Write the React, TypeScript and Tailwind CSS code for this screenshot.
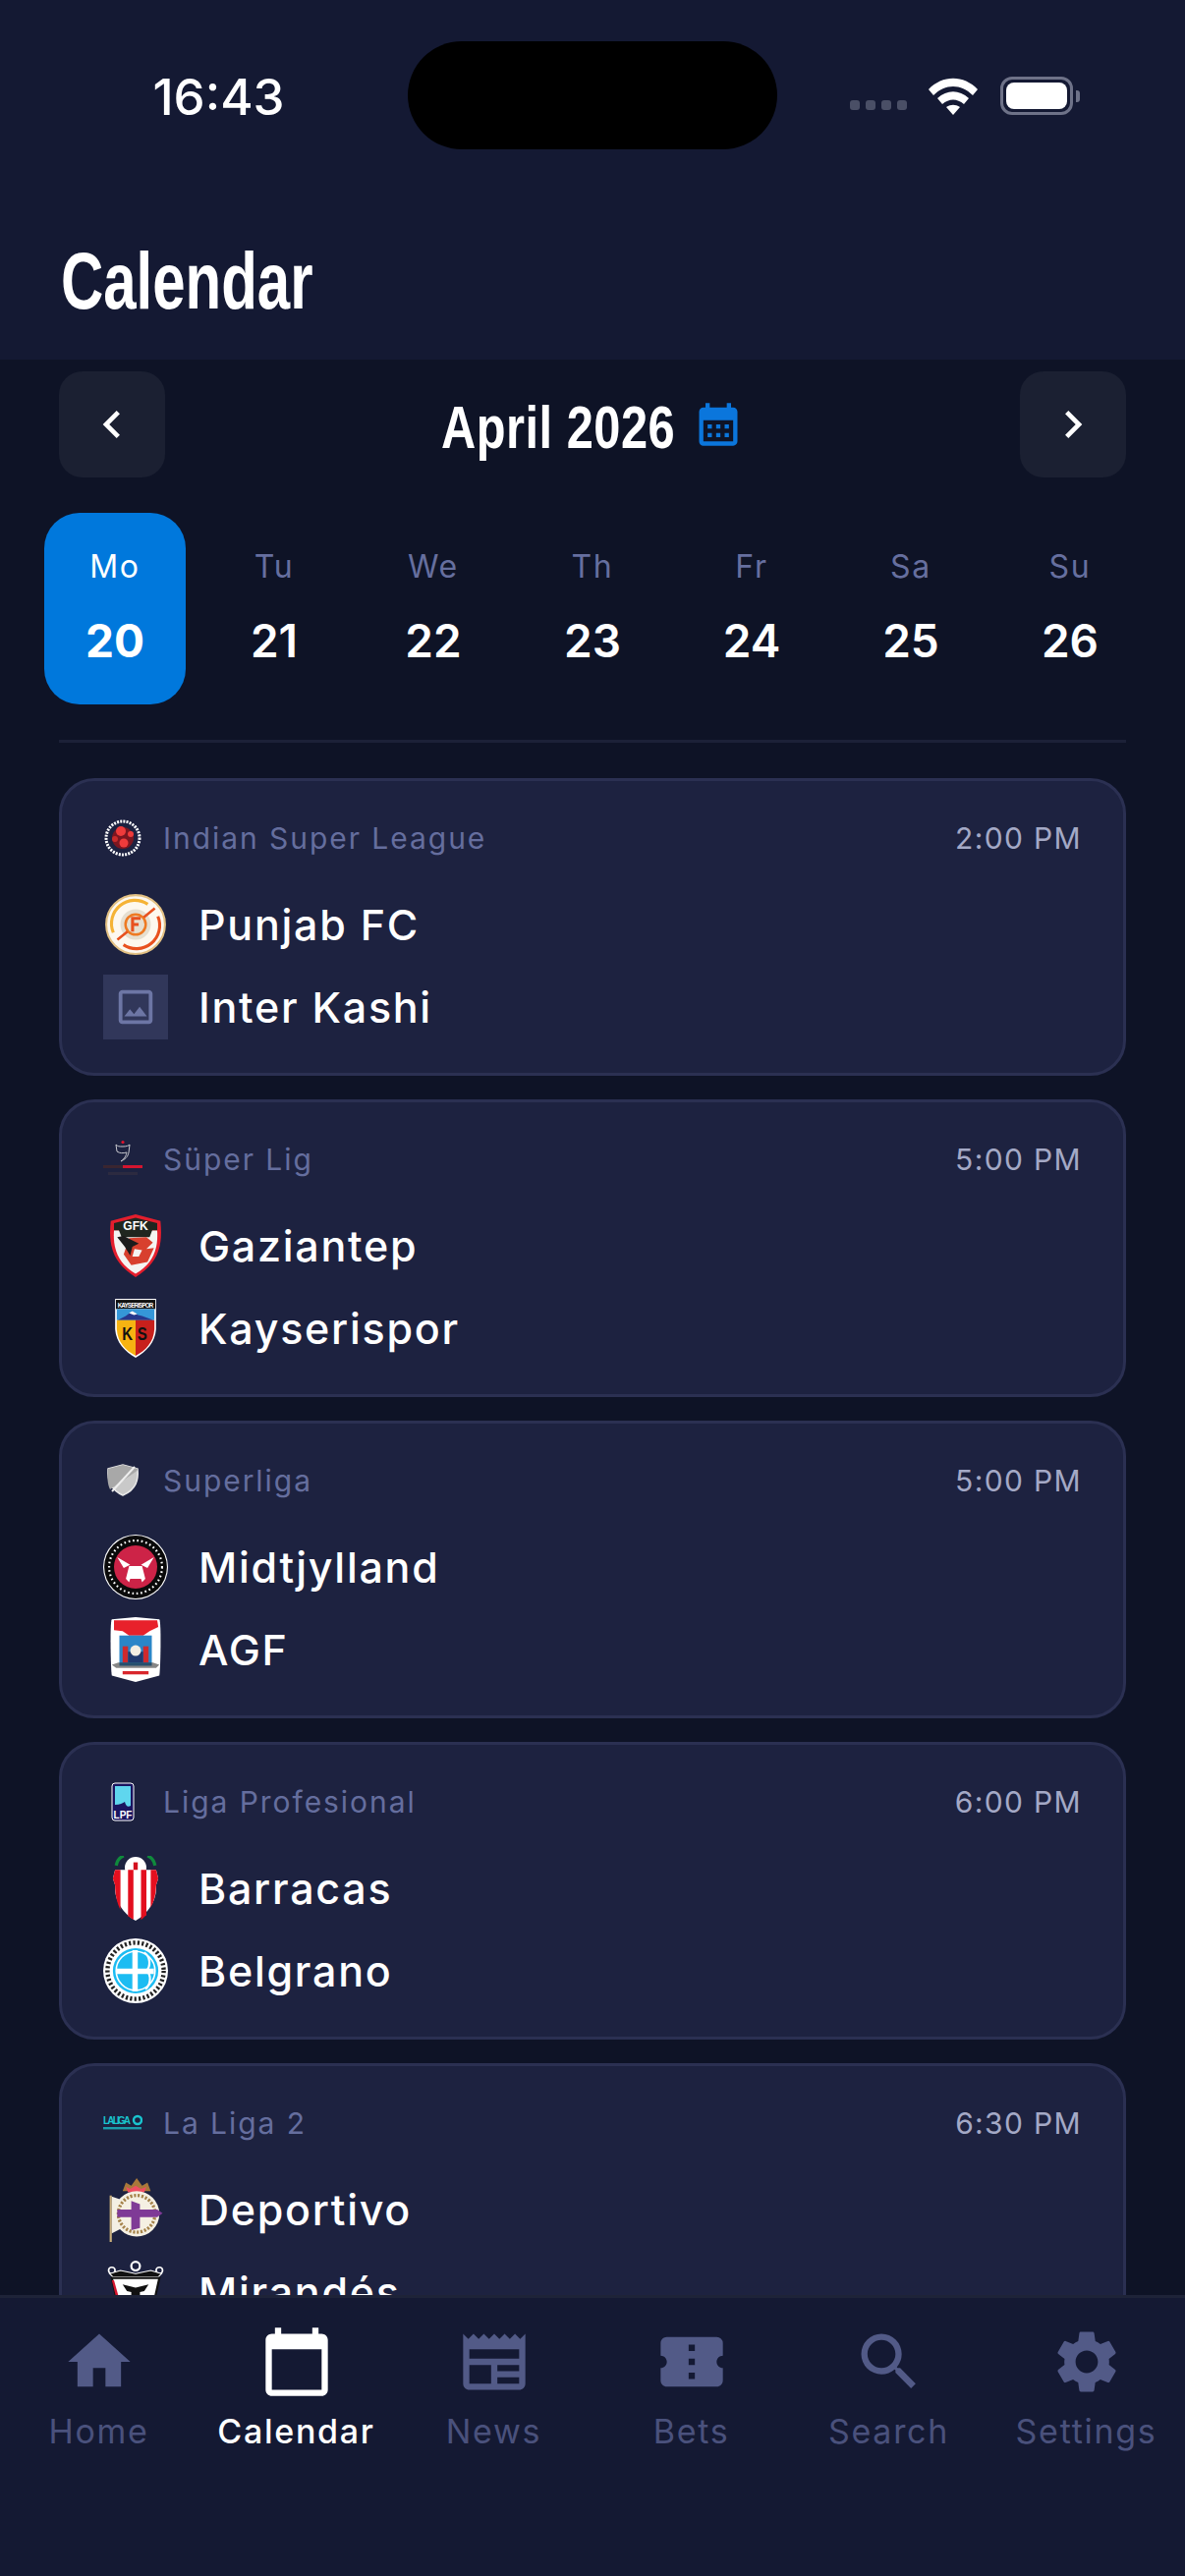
import React from "react";
import {
  MdHome,
  MdCalendarToday,
  MdNewspaper,
  MdConfirmationNumber,
  MdSearch,
  MdSettings,
  MdCalendarMonth,
  MdChevronLeft,
  MdChevronRight,
  MdOutlineImage,
} from "react-icons/md";

const days = [
  ["Mo", "20"],
  ["Tu", "21"],
  ["We", "22"],
  ["Th", "23"],
  ["Fr", "24"],
  ["Sa", "25"],
  ["Su", "26"],
];

// --- league logos ---
const IslLogo = () => (
  <svg viewBox="0 0 40 40" className="w-[40px] h-[40px]">
    <circle cx="20" cy="20" r="17" fill="none" stroke="#fff" strokeWidth="3" strokeDasharray="2 1.2" />
    <circle cx="20" cy="20" r="11" fill="#7b1620" />
    <circle cx="18" cy="13" r="5" fill="#ee3b3b" />
    <circle cx="28" cy="16" r="3" fill="#ee3b3b" />
    <circle cx="21" cy="25" r="4.5" fill="#ee3b3b" />
    <circle cx="12" cy="21" r="3" fill="#c62a2a" />
  </svg>
);

const SuperLigLogo = () => (
  <svg viewBox="0 0 40 40" className="w-[40px] h-[40px]">
    <path d="M13 5c2 2 3 2 7 2s6-1 7-2l-1 8c-1 5-4 7-8 9 4-3 5-5 6-9-4 1-7 1-10-1z" fill="none" stroke="#c9c9cf" strokeWidth="1" />
    <circle cx="20" cy="2.5" r="1.6" fill="#e3132d" />
    <rect x="0" y="26" width="20" height="3" fill="#3a2530" />
    <rect x="20" y="26" width="20" height="3" fill="#d4152f" />
    <rect x="5" y="33" width="30" height="3" fill="#2c2a40" />
  </svg>
);

const SuperligaLogo = () => (
  <svg viewBox="0 0 40 40" className="w-[40px] h-[40px]">
    <path d="M5 8l15-4 15 4c1 11-1 21-15 27C7 29 4 19 5 8z" fill="#c9c9c9" stroke="#e8e8e8" strokeWidth="1.5" />
    <path d="M5 8l15-4 15 4-.5 2L7 29C4 23 4 15 5 8z" fill="#a8a8a8" />
    <path d="M9 31L32 6" stroke="#eee" strokeWidth="2" />
  </svg>
);

const LpfLogo = () => (
  <svg viewBox="0 0 40 40" className="w-[40px] h-[40px]">
    <rect x="9" y="1" width="22" height="38" rx="3" fill="#1a1560" stroke="#fff" strokeWidth="1" />
    <path d="M12 4h16v20c-3 2-5 0-6-4-2 1-5 3-10 3z" fill="#5fd6ee" />
    <text x="20" y="37" textAnchor="middle" fontSize="10" fontWeight="700" fill="#fff" fontFamily="Liberation Sans, sans-serif">
      LPF
    </text>
  </svg>
);

const LaLigaLogo = () => (
  <svg viewBox="0 0 40 40" className="w-[40px] h-[40px]">
    <text x="0" y="21" fontSize="10" fontWeight="700" fill="#19c5cf" fontFamily="Liberation Sans, sans-serif" textLength="28">
      LALIGA
    </text>
    <circle cx="35" cy="17" r="4" fill="none" stroke="#19c5cf" strokeWidth="2.4" />
    <rect x="0" y="24" width="39" height="2.4" fill="#19c5cf" opacity="0.75" />
  </svg>
);

// --- team logos ---
const PunjabLogo = () => (
  <svg viewBox="-2 -2 64 64" className="w-full h-full">
    <circle cx="30" cy="30" r="29" fill="#fdf8ef" stroke="#e3c184" strokeWidth="2" />
    <path d="M8 38a23 23 0 0 1 34-28" fill="none" stroke="#f5b335" strokeWidth="3" />
    <path d="M52 22a23 23 0 0 1-34 28" fill="none" stroke="#e8511f" strokeWidth="3" />
    <circle cx="30" cy="30" r="15" fill="#e6dfd0" />
    <circle cx="30" cy="30" r="10" fill="none" stroke="#ee7a22" strokeWidth="2.4" />
    <path d="M12 45l10-8M38 23l11-9" stroke="#e8511f" strokeWidth="2.500" />
    <path d="M27 37V24h8M27 30h6" fill="none" stroke="#e8511f" strokeWidth="3" />
  </svg>
);

const GaziantepLogo = () => (
  <svg viewBox="0 0 60 60" className="w-full h-full">
    <path d="M30 1l23 6c2 20 0 38-23 52C7 45 5 27 7 7z" fill="#e41e2d" />
    <path d="M30 4l20 5v7H10V9z" fill="#20261f" />
    <path d="M10 16h40c1 16-3 30-20 40C13 46 9 32 10 16z" fill="#f4f4f2" />
    <path d="M14 14h32l-3 8H17z" fill="#20261f" />
    <text x="30" y="15" textAnchor="middle" fontSize="11" fontWeight="700" fill="#fff" fontFamily="Liberation Sans, sans-serif">
      GFK
    </text>
    <path d="M24 23l16-1 6 5-6 6 7-1-6 13-15 3-7-10z" fill="#d8402e" />
    <path d="M29 33l7 1-3 6h-6z" fill="#f4f4f2" />
    <path d="M13 22l6-1 8 4 6 3-6 3-2 8-5-8z" fill="#1c1c1c" />
  </svg>
);

const KayseriLogo = () => (
  <svg viewBox="0 0 60 60" preserveAspectRatio="none" className="w-[50px] h-[62px] mx-auto mt-[2px]">
    <path d="M5 1h50v30c-1 13-12 22-25 28C17 53 6 44 5 31z" fill="#fff" />
    <rect x="6" y="2" width="48" height="9" fill="#111" />
    <text x="30" y="9.500" textAnchor="middle" fontSize="7.500" fontWeight="700" fill="#fff" fontFamily="Liberation Sans, sans-serif" textLength="44">
      KAYSERISPOR
    </text>
    <rect x="7" y="11" width="46" height="11" fill="#3597d8" />
    <path d="M8 22l10-4 8-5 7 4 5 1 14 4z" fill="#27378c" />
    <path d="M22 15l4-2 6 3-4 1z" fill="#fff" />
    <path d="M7 22h23v35C18 52 8 44 7 31z" fill="#f6b312" />
    <path d="M30 22h23v9c-1 13-11 21-23 26z" fill="#c8201c" />
    <text x="20" y="42" textAnchor="middle" fontSize="18" fontWeight="700" fill="#111" fontFamily="Liberation Sans, sans-serif">
      K
    </text>
    <text x="38" y="42" textAnchor="middle" fontSize="18" fontWeight="700" fill="#111" fontFamily="Liberation Sans, sans-serif">
      S
    </text>
  </svg>
);

const MidtjyllandLogo = () => (
  <svg viewBox="0 0 60 60" className="w-full h-full">
    <circle cx="30" cy="30" r="30" fill="#fff" />
    <circle cx="30" cy="30" r="29" fill="#0a0a0a" />
    <circle cx="30" cy="30" r="24.500" fill="none" stroke="#fff" strokeWidth="2" strokeDasharray="1.500 2.500" />
    <circle cx="30" cy="30" r="20" fill="#cd2347" />
    <path d="M13 21l12 7-6 3zM47 21l-12 7 6 3z" fill="#fff" />
    <path d="M24 29h12l3 12-3 3-1-3h-10l-1 3-3-3z" fill="#fff" />
  </svg>
);

const AgfLogo = () => (
  <svg viewBox="0 0 60 60" className="w-full h-full">
    <path d="M8 2l22-2 22 2c2 2 1 48 0 52L30 60 8 54C7 50 6 4 8 2z" fill="#fff" />
    <path d="M10 3h40l1 6-8 4-6 4H24l-6-4-8-1z" fill="#e8212b" />
    <rect x="15" y="17" width="30" height="28" fill="#2b86c8" />
    <rect x="18" y="27" width="5" height="15" fill="#cf2a2e" />
    <rect x="37" y="27" width="5" height="15" fill="#cf2a2e" />
    <rect x="23" y="32" width="14" height="10" fill="#203a6e" />
    <circle cx="30" cy="31" r="5" fill="#f3efe3" />
    <path d="M8 44l6-2 32 0 6 2-3 3H12z" fill="#222" opacity=".55" />
    <rect x="18" y="50" width="24" height="3" fill="#d8262c" />
  </svg>
);

const BarracasLogo = () => (
  <svg viewBox="0 0 60 60" className="w-full h-full">
    <path d="M12 9c1-5 4-8 7-9M48 9c-1-5-4-8-7-9" stroke="#0f8a3c" strokeWidth="3" fill="none" />
    <circle cx="30" cy="11" r="10" fill="#fff" />
    <path d="M28 6h4v9h-4z" fill="#d40f1e" />
    <path d="M11 13h38l2 8-2 6c1 14-7 26-19 33C18 53 10 41 11 27l-2-6z" fill="#fff" />
    <path d="M11 13h5v37c-3-6-5-14-5-23l-2-6zM23 13h5v46c-2-1-3-2-5-3zM35 13h5v42c-2 1-3 3-5 4zM47 13h2l2 8-2 6c0 8-2 15-5 21V13z" fill="#e30f1f" />
  </svg>
);

const BelgranoLogo = () => (
  <svg viewBox="0 0 60 60" className="w-full h-full">
    <circle cx="30" cy="30" r="30" fill="#fff" />
    <circle cx="30" cy="30" r="26" fill="none" stroke="#222" strokeWidth="4" strokeDasharray="2 2" />
    <circle cx="30" cy="30" r="21" fill="#1cbcf2" />
    <circle cx="30" cy="30" r="18" fill="none" stroke="#fff" strokeWidth="1.500" />
    <path d="M27 11h5v38h-5zM12 28h35v5H12z" fill="#fff" />
    <path d="M38 13c6 4 6 13 2 17 5 4 4 13-1 17" fill="none" stroke="#fff" strokeWidth="2" />
  </svg>
);

const DeportivoLogo = () => (
  <svg viewBox="0 0 60 60" className="w-full h-full">
    <path d="M18 13l3-8 5 3 5-7 5 7 5-3 3 8z" fill="#a9783a" />
    <path d="M21 9l4 2 5-3 5 3 5-2-2 5H23z" fill="#ee4d62" />
    <rect x="6" y="17" width="2" height="43" fill="#c9ae7c" />
    <path d="M8 18l12 4v24L8 52z" fill="#f3efe4" />
    <circle cx="31" cy="34" r="21" fill="#f5f0e3" />
    <circle cx="31" cy="34" r="17" fill="none" stroke="#a5834b" strokeWidth="3" strokeDasharray="2 1.500" />
    <path d="M13 30h13v-8l8 3v5h16l5 3.500-5 3.500H34v10l-8 2V37H13z" fill="#7f3a96" />
  </svg>
);

const MirandesLogo = () => (
  <svg viewBox="0 0 60 60" className="w-full h-full">
    <circle cx="8" cy="10" r="3" fill="none" stroke="#fff" strokeWidth="1.500" />
    <circle cx="52" cy="10" r="3" fill="none" stroke="#fff" strokeWidth="1.500" />
    <circle cx="30" cy="6" r="4" fill="none" stroke="#fff" strokeWidth="2" />
    <path d="M6 13l10-3 14 3 14-3 10 3-3 3H9z" fill="#111" stroke="#fff" strokeWidth="1" />
    <path d="M8 17h44l-8 36H16z" fill="#fff" stroke="#111" strokeWidth="2" />
    <path d="M10 19l9 32h-3L8 19z" fill="#d4152f" />
    <path d="M18 23l12 3 12-3-4 6-4 1v10h-8V30l-4-1z" fill="#111" />
  </svg>
);

// grey placeholder when a crest is missing
const NoLogo = () => (
  <div className="w-full h-full bg-[#31375a] flex items-center justify-center">
    <MdOutlineImage className="w-[46px] h-[46px] text-[#6d76a5]" />
  </div>
);

const matches = [
  {
    league: "Indian Super League",
    time: "2:00 PM",
    LeagueIcon: IslLogo,
    home: "Punjab FC",
    HomeIcon: PunjabLogo,
    away: "Inter Kashi",
    AwayIcon: NoLogo,
  },
  {
    league: "Süper Lig",
    time: "5:00 PM",
    LeagueIcon: SuperLigLogo,
    home: "Gaziantep",
    HomeIcon: GaziantepLogo,
    away: "Kayserispor",
    AwayIcon: KayseriLogo,
  },
  {
    league: "Superliga",
    time: "5:00 PM",
    LeagueIcon: SuperligaLogo,
    home: "Midtjylland",
    HomeIcon: MidtjyllandLogo,
    away: "AGF",
    AwayIcon: AgfLogo,
  },
  {
    league: "Liga Profesional",
    time: "6:00 PM",
    LeagueIcon: LpfLogo,
    home: "Barracas",
    HomeIcon: BarracasLogo,
    away: "Belgrano",
    AwayIcon: BelgranoLogo,
  },
  {
    league: "La Liga 2",
    time: "6:30 PM",
    LeagueIcon: LaLigaLogo,
    home: "Deportivo",
    HomeIcon: DeportivoLogo,
    away: "Mirandés",
    AwayIcon: MirandesLogo,
  },
];

const tabs = [
  { label: "Home", Icon: MdHome },
  { label: "Calendar", Icon: MdCalendarToday, active: true },
  { label: "News", Icon: MdNewspaper },
  { label: "Bets", Icon: MdConfirmationNumber },
  { label: "Search", Icon: MdSearch },
  { label: "Settings", Icon: MdSettings },
];

const StatusBar = () => (
  <div className="h-[194px] flex items-start relative">
    <div className="w-[415px] pt-[70px] pl-[30px] text-center text-[51px] leading-[58px] font-medium text-white font-['Inter',sans-serif]">
      16:43
    </div>
    <div className="mt-[42px] w-[376px] h-[110px] rounded-[55px] bg-black" />
    <div className="pl-[74px] pt-[78px] flex items-center">
      <div className="flex gap-[6px] mt-[19px]">
        <div className="w-[10px] h-[10px] rounded-[3px] bg-[#4a4f66]" />
        <div className="w-[10px] h-[10px] rounded-[3px] bg-[#4a4f66]" />
        <div className="w-[10px] h-[10px] rounded-[3px] bg-[#4a4f66]" />
        <div className="w-[10px] h-[10px] rounded-[3px] bg-[#4a4f66]" />
      </div>
      <svg viewBox="0 0 50 38" className="w-[50px] h-[38px] ml-[22px]">
        <path d="M0 12C14-3 36-3 50 12l-5 6C33 6 17 6 5 18z" fill="#fff" />
        <path d="M9 21c10-9 22-9 32 0l-5 6c-7-6-15-6-22 0z" fill="#fff" />
        <path d="M18 30c5-3 9-3 14 0l-7 8z" fill="#fff" />
      </svg>
      <div className="ml-[23px] w-[74px] h-[39px] rounded-[12px] border-[3px] border-[#6e7288] p-[3px]">
        <div className="w-full h-full rounded-[8px] bg-white" />
      </div>
      <div className="ml-[3px] w-[4px] h-[12px] rounded-r-[3px] bg-[#6e7288]" />
    </div>
  </div>
);

const MatchCard = ({ m }: { m: (typeof matches)[number] }) => (
  <div className="shrink-0 h-[303px] rounded-[36px] border-[3px] border-[#2b3052] bg-[#1d2240] pl-[42px] pr-[42px] pt-[38px]">
    <div className="flex items-center justify-between h-[40px]">
      <div className="flex items-center gap-[21px]">
        <m.LeagueIcon />
        <span className="text-[30px] text-[#656e9e] tracking-[0.065em] font-['Inter',sans-serif]">{m.league}</span>
      </div>
      <span className="text-[30px] text-[#a4a9c6] tracking-[0.045em] font-['Inter',sans-serif]">{m.time}</span>
    </div>
    <div className="mt-[35px] flex flex-col gap-[18px]">
      {[
        { name: m.home, Crest: m.HomeIcon },
        { name: m.away, Crest: m.AwayIcon },
      ].map((t) => (
        <div key={t.name} className="flex items-center h-[66px]">
          <div className="w-[66px] h-[66px] shrink-0">
            <t.Crest />
          </div>
          <span className="ml-[31px] text-[43px] leading-[52px] font-medium text-white tracking-[0.04em] font-['Inter',sans-serif]">
            {t.name}
          </span>
        </div>
      ))}
    </div>
  </div>
);

export default function App() {
  return (
    <div className="w-[1206px] h-[2622px] flex flex-col overflow-hidden bg-[#0e1326]">
      <header className="h-[366px] shrink-0 bg-[#141933]">
        <StatusBar />
        {/* no condensed family installed, so the headings are squeezed */}
        <h1 className="ml-[62px] mt-[46px] w-max origin-left scale-x-[0.74] text-[81px] leading-[92px] font-bold text-white font-['Liberation_Sans',sans-serif]">
          Calendar
        </h1>
      </header>

      <main className="flex-1 min-h-0 flex flex-col overflow-hidden">
        <div className="shrink-0 px-[60px] pt-[12px] flex items-center justify-between">
          <button className="w-[108px] h-[108px] rounded-[24px] bg-[#1b2032] flex items-center justify-center">
            <MdChevronLeft className="w-[56px] h-[56px] text-white" />
          </button>
          <div className="flex items-center gap-[20px]">
            <div className="w-[236px]">
              <div className="w-max origin-left scale-x-[0.8] mt-[6px] text-[61px] leading-[72px] font-bold tracking-[0.01em] text-white font-['Liberation_Sans',sans-serif]">
                April 2026
              </div>
            </div>
            <MdCalendarMonth className="w-[52px] h-[52px] text-[#0b76dc]" />
          </div>
          <button className="w-[108px] h-[108px] rounded-[24px] bg-[#1b2032] flex items-center justify-center">
            <MdChevronRight className="w-[56px] h-[56px] text-white" />
          </button>
        </div>

        <div className="shrink-0 mt-[36px] mx-[36px] grid grid-cols-7">
          {days.map(([d, n], i) => (
            <div
              key={d}
              className={
                i === 0
                  ? "mx-[9px] h-[195px] rounded-[36px] bg-[#0078dc] flex flex-col items-center pt-[35px]"
                  : "mx-[9px] h-[195px] flex flex-col items-center pt-[35px]"
              }
            >
              <span
                className={
                  i === 0
                    ? "text-[32px] leading-[40px] text-white tracking-[0.055em] font-['Inter',sans-serif]"
                    : "text-[32px] leading-[40px] text-[#666f9f] tracking-[0.055em] font-['Inter',sans-serif]"
                }
              >
                {d}
              </span>
              <span
                className={
                  i === 0
                    ? "mt-[27px] text-[46px] leading-[56px] font-bold text-white font-['Inter',sans-serif]"
                    : "mt-[27px] text-[46px] leading-[56px] font-semibold text-white font-['Inter',sans-serif]"
                }
              >
                {n}
              </span>
            </div>
          ))}
        </div>

        <div className="shrink-0 mt-[36px] mx-[60px] h-[3px] bg-[#1c2138]" />

        <div className="flex-1 min-h-0 px-[60px] pt-[36px] flex flex-col gap-[24px] overflow-hidden">
          {matches.map((m) => (
            <MatchCard key={m.league} m={m} />
          ))}
        </div>
      </main>

      <nav className="h-[286px] shrink-0 bg-[#141933] border-t-[3px] border-[#1e2338] grid grid-cols-6">
        {tabs.map(({ label, Icon, active }) => (
          <div key={label} className="flex flex-col items-center pt-[27px]">
            <Icon className={active ? "w-[76px] h-[76px] text-white" : "w-[76px] h-[76px] text-[#525a87]"} />
            <span
              className={
                active
                  ? "mt-[12px] text-[34px] leading-[42px] font-medium text-white tracking-[0.05em] font-['Inter',sans-serif]"
                  : "mt-[12px] text-[34px] leading-[42px] text-[#4a517c] tracking-[0.05em] font-['Inter',sans-serif]"
              }
            >
              {label}
            </span>
          </div>
        ))}
      </nav>
    </div>
  );
}
